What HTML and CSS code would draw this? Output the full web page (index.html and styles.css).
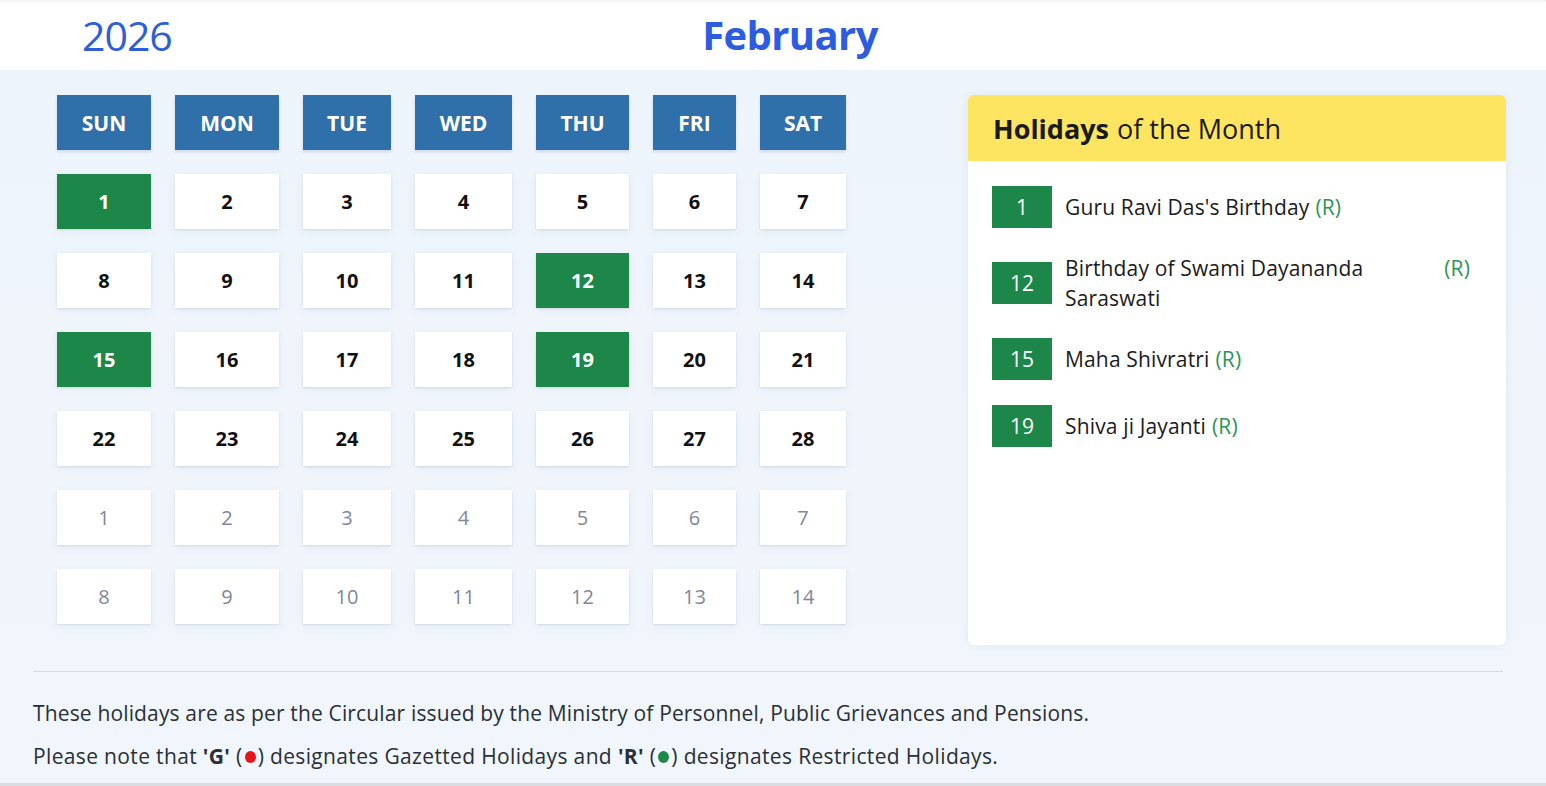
FILE: index.html
```html
<!DOCTYPE html>
<html lang="en">
<head>
<meta charset="utf-8">
<title>Holiday Calendar - February 2026</title>
<link rel="stylesheet" href="styles.css">
</head>
<body>
<header class="top">
  <div class="year">2026</div>
  <div class="month">February</div>
</header>
<main class="page">
  <section class="content">
    <div class="calendar">
      <div class="dow">SUN</div><div class="dow">MON</div><div class="dow">TUE</div><div class="dow">WED</div><div class="dow">THU</div><div class="dow">FRI</div><div class="dow">SAT</div>

      <div class="day hol">1</div><div class="day">2</div><div class="day">3</div><div class="day">4</div><div class="day">5</div><div class="day">6</div><div class="day">7</div>
      <div class="day">8</div><div class="day">9</div><div class="day">10</div><div class="day">11</div><div class="day hol">12</div><div class="day">13</div><div class="day">14</div>
      <div class="day hol">15</div><div class="day">16</div><div class="day">17</div><div class="day">18</div><div class="day hol">19</div><div class="day">20</div><div class="day">21</div>
      <div class="day">22</div><div class="day">23</div><div class="day">24</div><div class="day">25</div><div class="day">26</div><div class="day">27</div><div class="day">28</div>
      <div class="day next">1</div><div class="day next">2</div><div class="day next">3</div><div class="day next">4</div><div class="day next">5</div><div class="day next">6</div><div class="day next">7</div>
      <div class="day next">8</div><div class="day next">9</div><div class="day next">10</div><div class="day next">11</div><div class="day next">12</div><div class="day next">13</div><div class="day next">14</div>
    </div>

    <aside class="panel">
      <h2 class="panel-title"><b>Holidays</b> of the Month</h2>
      <ul class="hlist">
        <li class="hitem"><span class="hdate">1</span><span class="htext"><span class="hname">Guru Ravi Das's Birthday</span><span class="htype">(R)</span></span></li>
        <li class="hitem"><span class="hdate">12</span><span class="htext"><span class="hname">Birthday of Swami Dayananda Saraswati</span><span class="htype">(R)</span></span></li>
        <li class="hitem"><span class="hdate">15</span><span class="htext"><span class="hname">Maha Shivratri</span><span class="htype">(R)</span></span></li>
        <li class="hitem"><span class="hdate">19</span><span class="htext"><span class="hname">Shiva ji Jayanti</span><span class="htype">(R)</span></span></li>
      </ul>
    </aside>
  </section>

  <footer class="notes">
    <p>These holidays are as per the Circular issued by the Ministry of Personnel, Public Grievances and Pensions.</p>
    <p class="legend">Please note that <b>'G'</b> (<span class="dot red"></span>) designates Gazetted Holidays and <b>'R'</b> (<span class="dot green"></span>) designates Restricted Holidays.</p>
  </footer>
</main>
</body>
</html>
```

FILE: styles.css
```css
* { box-sizing: border-box; }

html, body {
  margin: 0;
  padding: 0;
}

body {
  font-family: "Open Sans", "Noto Sans", "Liberation Sans", sans-serif;
  color: #1b1b1b;
  background: #eef4fb;
  width: 1546px;
  height: 786px;
  overflow: hidden;
}

.top {
  height: 70px;
  background: #ffffff;
  display: flex;
  align-items: center;
  box-shadow: inset 0 3px 3px -2px rgba(0, 0, 0, 0.08);
}

.year {
  width: 620px;
  padding-left: 82px;
  font-size: 41px;
  letter-spacing: -1px;
  color: #2f5fd8;
  line-height: 1;
}

.month {
  width: 340px;
  text-align: center;
  font-size: 40px;
  font-weight: 700;
  letter-spacing: -0.6px;
  color: #2d5ce0;
  line-height: 1;
}

.page {
  height: 716px;
  padding: 0 43px 0 33px;
  background: linear-gradient(180deg, #eef4fb 0%, #f1f6fc 100%);
  border-bottom: 3px solid #d9dde2;
}

.content {
  display: flex;
  align-items: flex-start;
  padding-top: 25px;
  padding-bottom: 26px;
  border-bottom: 1px solid #d6dce4;
}

.calendar {
  flex-shrink: 0;
  display: grid;
  grid-template-columns: 94px 104px 88px 97px 93px 83px 86px;
  grid-auto-rows: 55px;
  column-gap: 24px;
  row-gap: 24px;
  margin-left: 24px;
}

.dow {
  background: #2f70aa;
  color: #ffffff;
  font-weight: 700;
  font-size: 21px;
  display: flex;
  align-items: center;
  justify-content: center;
  box-shadow: 0 2px 3px rgba(30, 60, 100, 0.15);
}

.day {
  background: #ffffff;
  display: flex;
  align-items: center;
  justify-content: center;
  font-size: 20px;
  font-weight: 700;
  color: #111111;
  box-shadow: 0 1px 2px rgba(40, 60, 100, 0.12), 0 3px 10px rgba(40, 70, 120, 0.05);
}

.day.hol {
  background: #1d874a;
  color: #ffffff;
}

.day.next {
  font-weight: 400;
  color: #7f8899;
}

.panel {
  flex-shrink: 0;
  margin-left: 122px;
  width: 538px;
  height: 550px;
  background: #ffffff;
  border-radius: 6px;
  box-shadow: 0 0 8px rgba(40, 70, 120, 0.08);
  overflow: hidden;
}

.panel-title {
  margin: 0;
  height: 66px;
  background: #fde561;
  padding-left: 25px;
  display: flex;
  align-items: center;
  font-size: 27px;
  font-weight: 400;
  color: #1a1a1a;
}

.panel-title b {
  font-weight: 700;
  margin-right: 8px;
}

.hlist {
  list-style: none;
  margin: 0;
  padding: 25px 36px 0 24px;
  display: flex;
  flex-direction: column;
  gap: 25px;
}

.hitem {
  display: flex;
  align-items: center;
  gap: 13px;
}

.hdate {
  flex: 0 0 60px;
  height: 42px;
  background: #1d874a;
  color: #ffffff;
  font-size: 21px;
  display: flex;
  align-items: center;
  justify-content: center;
}

.htext {
  display: flex;
  gap: 6px;
  font-size: 21px;
  line-height: 30px;
  color: #1b1b1b;
  letter-spacing: 0.15px;
}

.htype {
  color: #2f9558;
  white-space: nowrap;
}

.notes {
  padding-top: 26px;
}

.notes p {
  margin: 0 0 13px 0;
  font-size: 21px;
  line-height: 30px;
  color: #2b2f36;
  letter-spacing: 0.15px;
}

.notes .legend {
  letter-spacing: 0.35px;
}

.notes b {
  font-weight: 700;
}

.dot {
  display: inline-block;
  width: 11px;
  height: 12px;
  border-radius: 50%;
  vertical-align: 1px;
  margin: 0 2px;
}

.dot.red { background: #e8141b; }
.dot.green { background: #1d874a; }
```
